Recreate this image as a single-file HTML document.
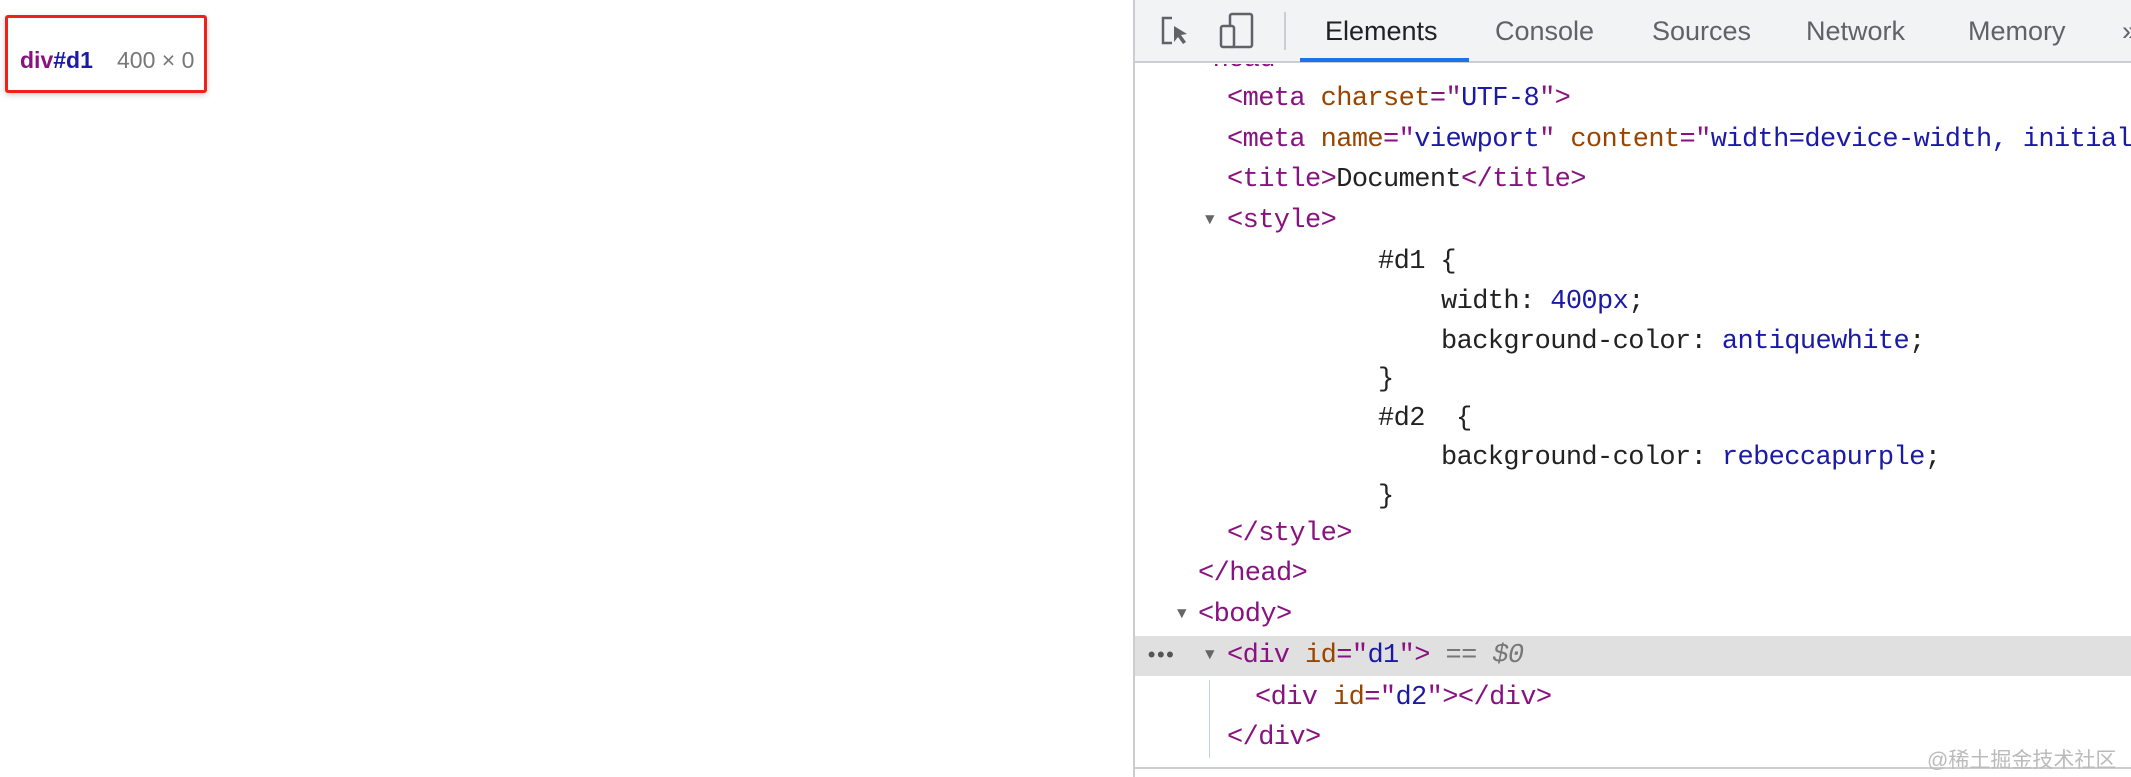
<!DOCTYPE html>
<html><head><meta charset="utf-8"><style>
body{margin:0;width:2131px;height:777px;background:#fff;position:relative;overflow:hidden;font-family:"Liberation Sans",sans-serif}
.a{position:absolute;white-space:pre}
#dt{position:absolute;left:1133px;top:0;width:998px;height:777px;border-left:2px solid #cbcdd1;background:#fff}
#tb{position:absolute;left:0;top:0;right:0;height:61px;background:#f1f3f4;border-bottom:2px solid #cbcdd1}
.tab{position:absolute;top:16px;font-size:27px;color:#5f6368}
.c{position:absolute;font-family:"Liberation Mono",monospace;font-size:27px;letter-spacing:-0.6px;white-space:pre;line-height:40px}
.t{color:#881280}.n{color:#994500}.v{color:#1a1aa6}.k{color:#222}
</style></head><body>
<div class="a" style="left:5px;top:15px;width:196px;height:72px;border:3px solid #f0201a;border-radius:3px;background:#fff;box-shadow:0 2px 6px rgba(0,0,0,.2)"></div>
<div class="a" style="left:20px;top:47px;font-size:23px;font-weight:bold"><span style="color:#881280">div</span><span style="color:#1a1aa6">#d1</span></div>
<div class="a" style="left:117px;top:47px;font-size:23px;color:#777">400 × 0</div>
<div id="dt">
<div id="tb">
<svg class="a" style="left:24px;top:14px" width="34" height="34" viewBox="0 0 34 34"><path d="M13 4H4v25h9" fill="none" stroke="#5f6368" stroke-width="2.5"/><path d="M15 12l13 8-6 1 5 7-3 2-5-7-4 5z" fill="#5f6368"/></svg>
<svg class="a" style="left:84px;top:12px" width="40" height="38" viewBox="0 0 40 38"><rect x="11" y="2" width="22" height="33" rx="2" fill="none" stroke="#5f6368" stroke-width="2.5"/><rect x="2" y="14" width="13" height="21" rx="2" fill="#f1f3f4" stroke="#5f6368" stroke-width="2.5"/></svg>
<div class="a" style="left:149px;top:12px;width:2px;height:38px;background:#cbcdd1"></div>
<div class="tab" style="left:190px;color:#202124">Elements</div>
<div class="a" style="left:165px;top:58px;width:169px;height:4px;background:#1a73e8"></div>
<div class="tab" style="left:360px">Console</div>
<div class="tab" style="left:517px">Sources</div>
<div class="tab" style="left:671px">Network</div>
<div class="tab" style="left:833px">Memory</div>
<div class="tab" style="left:987px">»</div>
</div>
<div class="a" style="left:0;top:636px;width:998px;height:40px;background:#e0e0e0"></div>
<div class="a" style="left:74px;top:680px;width:1px;height:78px;background:#b9d4ec"></div>
<div class="c" style="left:10px;top:637px;color:#555;letter-spacing:-4px;font-size:22px">•••</div>
<div class="c t" style="left:62px;top:40px;clip-path:inset(24px 0 0 0)">&lt;head&gt;</div>
<div class="c" style="left:92px;top:79px"><span class="t">&lt;meta </span><span class="n">charset</span><span class="t">="</span><span class="v">UTF-8</span><span class="t">"&gt;</span></div>
<div class="c" style="left:92px;top:120px"><span class="t">&lt;meta </span><span class="n">name</span><span class="t">="</span><span class="v">viewport</span><span class="t">" </span><span class="n">content</span><span class="t">="</span><span class="v">width=device-width, initial</span></div>
<div class="c" style="left:92px;top:160px"><span class="t">&lt;title&gt;</span><span class="k">Document</span><span class="t">&lt;/title&gt;</span></div>
<div class="c" style="left:70px;top:200px;font-size:16px;color:#666">▼</div>
<div class="c" style="left:92px;top:201px"><span class="t">&lt;style&gt;</span></div>
<div class="c k" style="left:243px;top:242px">#d1 {</div>
<div class="c k" style="left:306px;top:282px">width: <span class="v">400px</span>;</div>
<div class="c k" style="left:306px;top:322px">background-color: <span class="v">antiquewhite</span>;</div>
<div class="c k" style="left:243px;top:360px">}</div>
<div class="c k" style="left:243px;top:399px">#d2  {</div>
<div class="c k" style="left:306px;top:438px">background-color: <span class="v">rebeccapurple</span>;</div>
<div class="c k" style="left:243px;top:477px">}</div>
<div class="c t" style="left:92px;top:514px">&lt;/style&gt;</div>
<div class="c t" style="left:63px;top:554px">&lt;/head&gt;</div>
<div class="c" style="left:42px;top:594px;font-size:16px;color:#666">▼</div>
<div class="c t" style="left:63px;top:595px">&lt;body&gt;</div>
<div class="c" style="left:70px;top:635px;font-size:16px;color:#666">▼</div>
<div class="c" style="left:92px;top:636px"><span class="t">&lt;div </span><span class="n">id</span><span class="t">="</span><span class="v">d1</span><span class="t">"&gt;</span> <span style="color:#777">== <i>$0</i></span></div>
<div class="c" style="left:120px;top:678px"><span class="t">&lt;div </span><span class="n">id</span><span class="t">="</span><span class="v">d2</span><span class="t">"&gt;&lt;/div&gt;</span></div>
<div class="c t" style="left:92px;top:718px">&lt;/div&gt;</div>
<div class="a" style="left:0;top:767px;width:998px;height:2px;background:#cbcdd1"></div>
<div class="a" style="left:792px;top:744px;font-size:21px;color:#bbb;font-family:'Liberation Sans','Noto Sans CJK SC',sans-serif">@稀土掘金技术社区</div>
</div>
</body></html>
